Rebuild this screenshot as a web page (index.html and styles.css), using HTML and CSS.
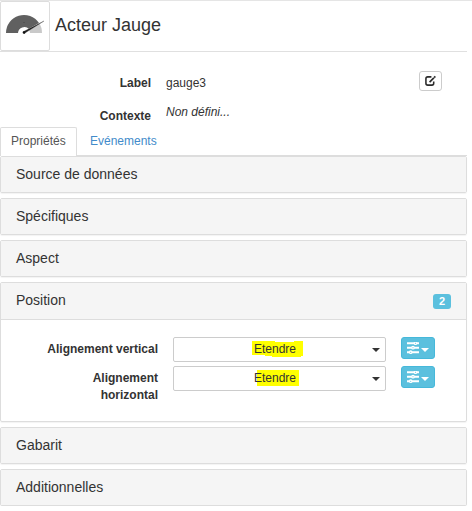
FILE: index.html
```html
<!DOCTYPE html>
<html lang="fr">
<head>
<meta charset="utf-8">
<title>Acteur Jauge</title>
<link rel="stylesheet" href="styles.css">
</head>
<body>
<header class="header">
  <div class="thumb">
    <svg width="48" height="48" viewBox="1 2 48 48">
      <path d="M6 33A18 18 0 0 1 39 23L29 29A6.500 6.500 0 0 0 18 33Z" fill="#606060"/>
      <path d="M39 23Q42 27 42 33H30Q30 30.500 28 29Z" fill="#c9c9c9"/>
      <path d="M44 21L23.200 31.700L24.200 33.600Z" fill="#222" stroke="#333" stroke-width=".3"/>
      <circle cx="24" cy="32.500" r="1.300" fill="#111"/>
      <circle cx="24" cy="22.500" r=".6" fill="#444"/>
    </svg>
  </div>
  <h1 class="title">Acteur Jauge</h1>
</header>
<section class="info">
  <div class="info-row">
    <span class="name">Label</span><span class="value">gauge3</span>
    <button class="edit" aria-label="Modifier">
      <svg width="12" height="12" viewBox="0 0 12 12" fill="none" stroke="#2b2b2b">
        <path d="M7 1.500H3Q1 1.500 1 3.500V8.500Q1 10.500 3 10.500H7.500Q9.500 10.500 9.500 8.500V6.500" stroke-width="1.700"/>
        <path d="M5 7.200L11.300 .9" stroke-width="1.800"/>
        <path d="M8.700 1.300L11 3.600" stroke="#fff" stroke-width=".6"/>
      </svg>
    </button>
  </div>
  <div class="info-row context">
    <span class="name">Contexte</span><em class="value">Non défini...</em>
  </div>
</section>
<nav class="tabs">
  <a class="tab active">Propriétés</a>
  <a class="tab">Evénements</a>
</nav>
<main class="panels">
  <section class="panel"><h2 class="heading">Source de données</h2></section>
  <section class="panel"><h2 class="heading">Spécifiques</h2></section>
  <section class="panel"><h2 class="heading">Aspect</h2></section>
  <section class="panel open">
    <h2 class="heading">Position<span class="badge">2</span></h2>
    <div class="body">
      <div class="field">
        <label class="name">Alignement vertical</label>
        <div class="select">
          <svg class="marker" width="52" height="18" viewBox="0 0 52 18"><path d="M0 1H23V2H42V1H51V16H49V17H20V16H13V15H0Z" fill="#ff0"/></svg>
          <span class="choice">Etendre</span><i class="caret"></i>
        </div>
        <button class="options" aria-label="Options">
          <svg width="12" height="12" viewBox="0 0 12 12" stroke="#fff" fill="none" stroke-width="2"><path d="M0 1.200H12M0 5.700H12M0 10.200H12"/><g fill="#5bc0de" stroke-width="1.300"><circle cx="8.500" cy="1.200" r="1.200"/><circle cx="6" cy="5.700" r="1.200"/><circle cx="3.700" cy="10.200" r="1.200"/></g></svg><i class="caret"></i>
        </button>
      </div>
      <div class="field">
        <label class="name">Alignement horizontal</label>
        <div class="select">
          <svg class="marker" width="52" height="18" viewBox="0 0 52 18"><path d="M5 1H47V17H5Z" fill="#ff0"/></svg>
          <span class="choice">Etendre</span><i class="caret"></i>
        </div>
        <button class="options" aria-label="Options">
          <svg width="12" height="12" viewBox="0 0 12 12" stroke="#fff" fill="none" stroke-width="2"><path d="M0 1.200H12M0 5.700H12M0 10.200H12"/><g fill="#5bc0de" stroke-width="1.300"><circle cx="8.500" cy="1.200" r="1.200"/><circle cx="6" cy="5.700" r="1.200"/><circle cx="3.700" cy="10.200" r="1.200"/></g></svg><i class="caret"></i>
        </button>
      </div>
    </div>
  </section>
  <section class="panel"><h2 class="heading">Gabarit</h2></section>
  <section class="panel"><h2 class="heading">Additionnelles</h2></section>
</main>
</body>
</html>
```
FILE: styles.css
```css
* { box-sizing: border-box; }
body {
  margin: 0;
  background: #fff;
  border-top: 1px solid #e5e5e5;
  color: #333;
  font: 12px/17px "Liberation Sans", Arial, sans-serif;
}
.header {
  display: flex;
  width: 467px;
  height: 51px;
  border-bottom: 1px solid #e0e0e0;
}
.thumb {
  width: 50px;
  height: 50px;
  border: 1px solid #ddd;
  border-radius: 2px;
}
.thumb svg { display: block; }
.title {
  margin: 14px 0 0 5px;
  font-size: 18px;
  line-height: 20px;
  font-weight: 400;
}
.info {
  width: 467px;
  height: 75px;
  padding-top: 19px;
}
.info-row {
  display: flex;
  height: 29px;
  padding-top: 4px;
}
.info .name {
  width: 151px;
  margin-right: 15px;
  text-align: right;
  font-weight: 700;
}
.info .context .name { margin-top: 4px; }
.edit {
  display: flex;
  width: 23px;
  height: 20px;
  margin: -4px 25px 0 auto;
  padding: 3px 5px;
  background: #fff;
  border: 1px solid #ccc;
  border-radius: 3px;
}
.tabs {
  display: flex;
  width: 467px;
  height: 29px;
  border-bottom: 1px solid #ddd;
}
.tab {
  height: 29px;
  padding: 6px 11px 0 13px;
  color: #428bca;
}
.tab.active {
  width: 77px;
  padding: 5px 0 0 10px;
  background: #fff;
  border: 1px solid #ddd;
  border-bottom: 0;
  border-radius: 2px 2px 0 0;
  color: #555;
}
.panels {
  display: flex;
  flex-direction: column;
  gap: 5px;
  width: 467px;
}
.panel {
  height: 37px;
  border: 1px solid #ddd;
  border-radius: 2px;
  box-shadow: 0 1px 1px rgba(0,0,0,.05);
}
.panel.open { height: 140px; }
.heading {
  display: flex;
  justify-content: space-between;
  height: 35px;
  margin: 0;
  padding: 9px 15px 0;
  background: #f5f5f5;
  font-size: 14px;
  line-height: 16px;
  font-weight: 400;
}
.open .heading {
  height: 37px;
  border-bottom: 1px solid #ddd;
}
.badge {
  width: 18px;
  height: 15px;
  margin-top: 2px;
  background: #5bc0de;
  border-radius: 3px;
  color: #fff;
  font-size: 11px;
  line-height: 15px;
  font-weight: 700;
  text-align: center;
}
.body { padding-top: 17px; }
.field {
  display: flex;
  height: 29px;
}
.field .name {
  width: 157px;
  margin-right: 15px;
  padding: 4px 0 0 40px;
  text-align: right;
  font-weight: 700;
}
.select {
  position: relative;
  width: 213px;
  height: 25px;
  border: 1px solid #ccc;
  border-radius: 2px;
}
.marker {
  position: absolute;
  left: 78px;
  top: 2px;
}
.choice {
  position: absolute;
  left: 80px;
  top: 3px;
}
.caret {
  border: 4px solid transparent;
  border-top-color: currentColor;
  border-bottom: 0;
}
.select .caret {
  position: absolute;
  right: 5px;
  top: 10px;
}
.options {
  display: flex;
  width: 34px;
  height: 22px;
  margin-left: 15px;
  padding: 4px 5px;
  background: #5bc0de;
  border: 1px solid #46b8da;
  border-radius: 3px;
  color: #fff;
}
.options svg { flex: none; }
.options .caret { margin: 6px 0 0 2px; }
```
